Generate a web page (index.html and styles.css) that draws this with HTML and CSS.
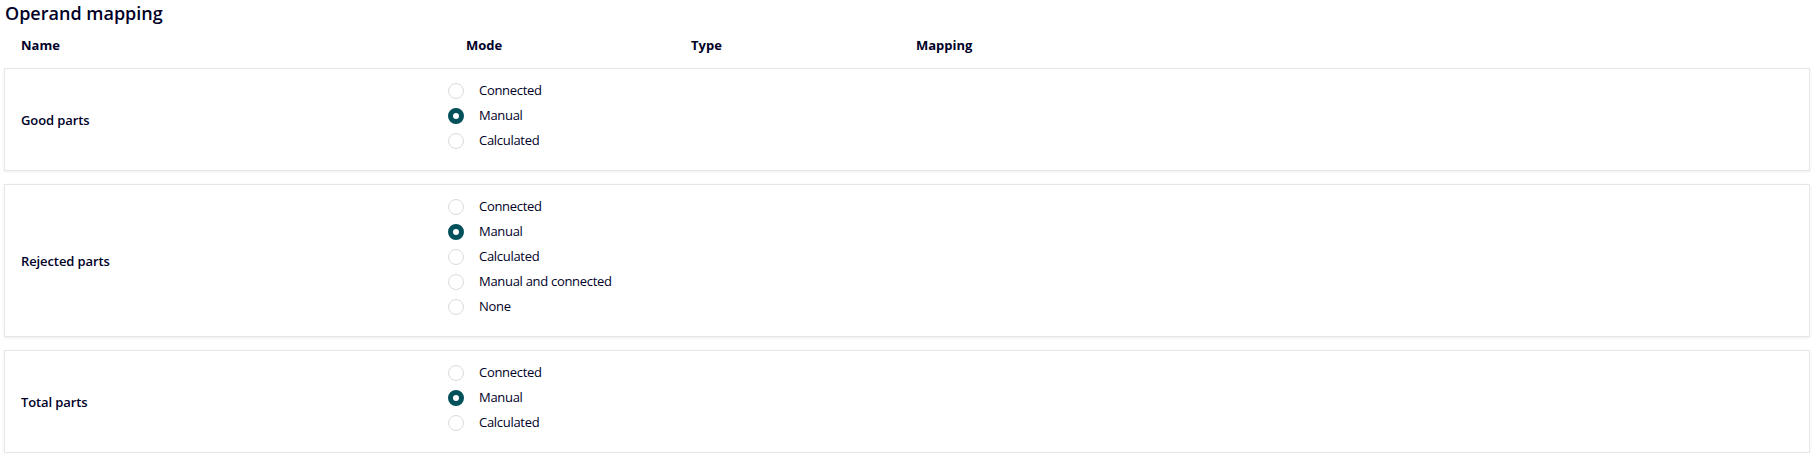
FILE: index.html
```html
<!DOCTYPE html>
<html lang="en">
<head>
<meta charset="utf-8">
<title>Operand mapping</title>
<link rel="stylesheet" href="styles.css">
</head>
<body>
<div class="page">
  <h1 class="title">Operand mapping</h1>
  <div class="header-row">
    <div class="hcell">Name</div>
    <div class="hcell">Mode</div>
    <div class="hcell">Type</div>
    <div class="hcell">Mapping</div>
  </div>

  <div class="card">
    <div class="name">Good parts</div>
    <div class="radios">
      <label class="radio-row"><span class="radio"></span><span class="label">Connected</span></label>
      <label class="radio-row"><span class="radio checked"></span><span class="label">Manual</span></label>
      <label class="radio-row"><span class="radio"></span><span class="label">Calculated</span></label>
    </div>
  </div>

  <div class="card">
    <div class="name">Rejected parts</div>
    <div class="radios">
      <label class="radio-row"><span class="radio"></span><span class="label">Connected</span></label>
      <label class="radio-row"><span class="radio checked"></span><span class="label">Manual</span></label>
      <label class="radio-row"><span class="radio"></span><span class="label">Calculated</span></label>
      <label class="radio-row"><span class="radio"></span><span class="label">Manual and connected</span></label>
      <label class="radio-row"><span class="radio"></span><span class="label">None</span></label>
    </div>
  </div>

  <div class="card">
    <div class="name">Total parts</div>
    <div class="radios">
      <label class="radio-row"><span class="radio"></span><span class="label">Connected</span></label>
      <label class="radio-row"><span class="radio checked"></span><span class="label">Manual</span></label>
      <label class="radio-row"><span class="radio"></span><span class="label">Calculated</span></label>
    </div>
  </div>
</div>
</body>
</html>
```

FILE: styles.css
```css
* {
  box-sizing: border-box;
}

body {
  margin: 0;
  background: #ffffff;
  color: #000028;
  font-family: "Open Sans", "Noto Sans", "Liberation Sans", sans-serif;
}

.page {
  padding: 0 7px 0 4px;
}

.title {
  margin: 0;
  padding: 1px 0 0 1px;
  font-size: 18px;
  line-height: 24px;
  font-weight: 600;
  color: #000028;
}

.header-row {
  display: grid;
  grid-template-columns: 445px 225px 225px 1fr;
  margin-top: 11px;
  padding-left: 17px;
  font-size: 13px;
  line-height: 18px;
  font-weight: 700;
}

.card {
  display: grid;
  grid-template-columns: 427px 1fr;
  align-items: center;
  margin-top: 14px;
  padding: 9px 16px 17px;
  border: 1px solid #e6e6e6;
  box-shadow: 0 1px 3px rgba(0, 0, 0, 0.07);
  background: #ffffff;
}

.card + .card {
  margin-top: 13px;
}

.name {
  font-size: 13px;
  font-weight: 600;
  line-height: 18px;
  padding-top: 8px;
  letter-spacing: -0.1px;
}

.radios {
  align-self: start;
  display: flex;
  flex-direction: column;
}

.radio-row {
  display: flex;
  align-items: center;
  gap: 15px;
  height: 25px;
  font-size: 13px;
  line-height: 25px;
}

.label {
  letter-spacing: -0.3px;
}

.radio {
  width: 16px;
  height: 16px;
  border-radius: 50%;
  border: 1px solid #dedbd6;
  background: #ffffff;
  flex: none;
}

.radio.checked {
  border: 5px solid #005159;
}
```
